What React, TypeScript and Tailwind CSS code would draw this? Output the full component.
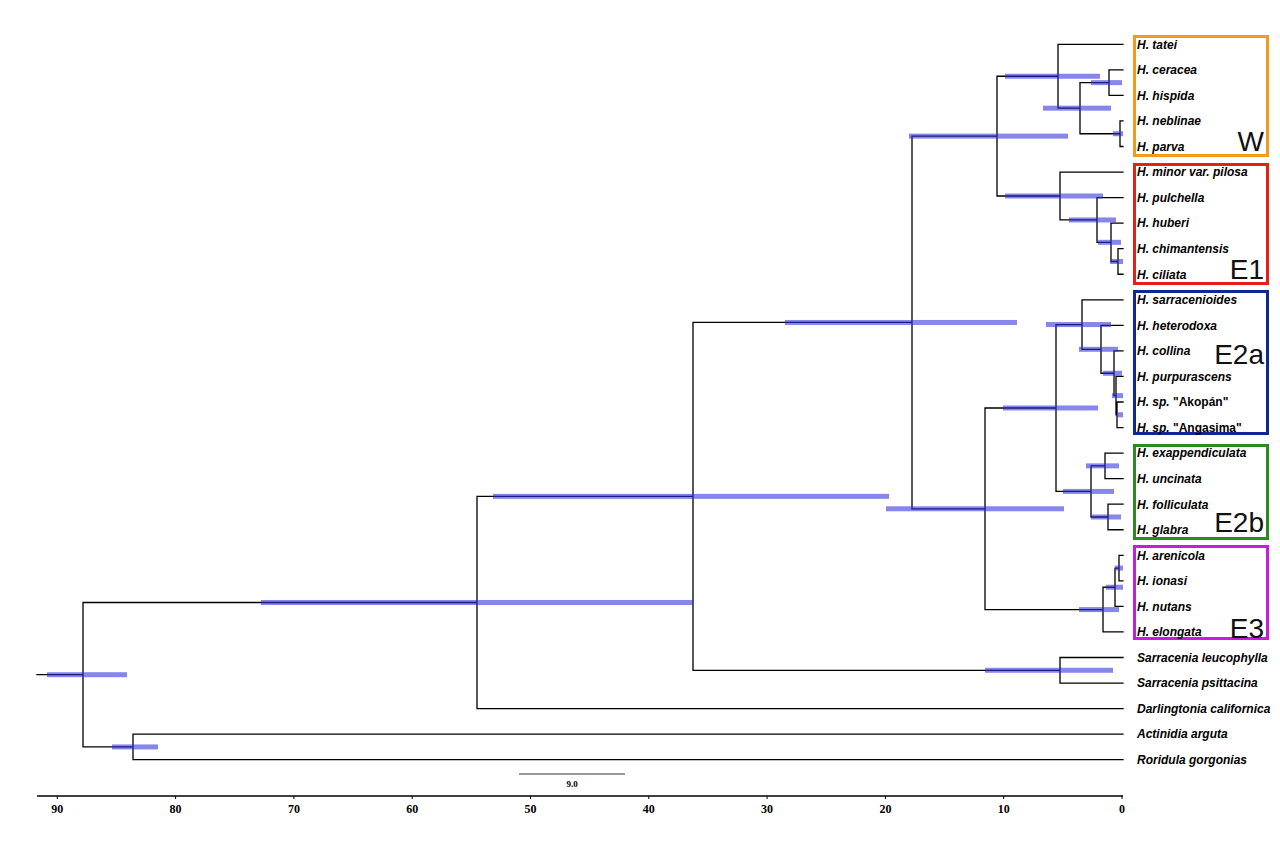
import React from "react";

// Dated phylogeny of Heliamphora with 95% HPD bars

type Node = { x: number; h: [number, number]; c: Array<Node | number> };

const n = (x: number, h: [number, number], ...c: Array<Node | number>): Node => ({ x, h, c });

const LEAF_END = 1123;
const leafY = (i: number) => 44.3 + i * 25.55;

const leaves: Array<[string, string?]> = [
  ["H. tatei"],
  ["H. ceracea"],
  ["H. hispida"],
  ["H. neblinae"],
  ["H. parva"],
  ["H. minor var. pilosa"],
  ["H. pulchella"],
  ["H. huberi"],
  ["H. chimantensis"],
  ["H. ciliata"],
  ["H. sarracenioides"],
  ["H. heterodoxa"],
  ["H. collina"],
  ["H. purpurascens"],
  ["H. sp.", ' "Akopán"'],
  ["H. sp.", ' "Angasima"'],
  ["H. exappendiculata"],
  ["H. uncinata"],
  ["H. folliculata"],
  ["H. glabra"],
  ["H. arenicola"],
  ["H. ionasi"],
  ["H. nutans"],
  ["H. elongata"],
  ["Sarracenia leucophylla"],
  ["Sarracenia psittacina"],
  ["Darlingtonia californica"],
  ["Actinidia arguta"],
  ["Roridula gorgonias"],
];

const tree = n(83, [47, 127],
  n(477, [261, 693],
    n(693, [493, 889],
      n(912, [785, 1017],
        n(997, [909, 1068],
          n(1058, [1005, 1100], 0,
            n(1080, [1043, 1111], n(1109, [1091, 1122], 1, 2), n(1120, [1113, 1123], 3, 4))),
          n(1060, [1005, 1103], 5,
            n(1097, [1069, 1116], 6, n(1111, [1098, 1121], 7, n(1118, [1110, 1123], 8, 9))))
        ),
        n(985, [886, 1064],
          n(1056, [1003, 1098],
            n(1082, [1046, 1111], 10,
              n(1101, [1079, 1118], 11,
                n(1114, [1103, 1122], 12, n(1116, [1112, 1123], 13, n(1117, [1117, 1123], 14, 15))))),
            n(1091, [1063, 1114], n(1105, [1086, 1119], 16, 17), n(1108, [1091, 1121], 18, 19))
          ),
          n(1103, [1079, 1119], n(1115, [1106, 1123], n(1119, [1115, 1123], 20, 21), 22), 23)
        )
      ),
      n(1060, [985, 1113], 24, 25)
    ),
    26
  ),
  n(133, [112, 158], 27, 28)
);

const paths: string[] = [];
const bars: { x1: number; x2: number; y: number }[] = [];

function layout(node: Node): number {
  const ys = node.c.map((ch) => (typeof ch === "number" ? leafY(ch) : layout(ch)));
  const xs = node.c.map((ch) => (typeof ch === "number" ? LEAF_END : ch.x));
  paths.push(`M${node.x} ${ys[0]}V${ys[ys.length - 1]}`);
  ys.forEach((y, i) => paths.push(`M${node.x} ${y}H${xs[i]}`));
  const y = (ys[0] + ys[ys.length - 1]) / 2;
  bars.push({ x1: node.h[0], x2: node.h[1], y });
  return y;
}

const rootY = layout(tree);
paths.push(`M37 ${rootY}H${tree.x}`);

const clades = [
  { label: "W", y: 35, h: 122, base: 151, color: "#f39a1e" },
  { label: "E1", y: 163, h: 122, base: 279, color: "#e32119" },
  { label: "E2a", y: 290, h: 145, base: 364, color: "#10279a" },
  { label: "E2b", y: 444, h: 96, base: 532, color: "#2a8c20" },
  { label: "E3", y: 545, h: 95, base: 638, color: "#c41edc" },
];

const ticks = [90, 80, 70, 60, 50, 40, 30, 20, 10, 0];
const tx = (t: number) => 1122 - 11.83 * t;

export default function App() {
  return (
    <div className="w-[1280px] h-[853px] bg-white overflow-hidden">
      <svg width={1280} height={853} viewBox="0 0 1280 853" className="block font-['Liberation_Sans',Arial,sans-serif]">
        {/* branches */}
        <path d={paths.join("")} stroke="#000" strokeWidth={1.3} fill="none" strokeLinecap="square" />

        {/* HPD bars */}
        {bars.map((b, i) => (
          <rect key={i} x={b.x1} y={b.y - 2.5} width={b.x2 - b.x1} height={5} fill="#2f2fdc" fillOpacity={0.58} />
        ))}

        {/* clade boxes */}
        {clades.map((c) => (
          <g key={c.label}>
            <rect x={1134.5} y={c.y + 1.5} width={133} height={c.h - 3} fill="none" stroke={c.color} strokeWidth={3} />
            <text x={1264} y={c.base} textAnchor="end" fill="#111" className="text-[28px]">
              {c.label}
            </text>
          </g>
        ))}

        {/* tip labels */}
        {leaves.map(([it, up], i) => (
          <text key={i} x={1137} y={leafY(i) + 4.3} fill="#000" className="text-[12px] font-bold">
            <tspan className="italic">{it}</tspan>
            {up && <tspan>{up}</tspan>}
          </text>
        ))}

        {/* scale bar */}
        <line x1={519} x2={625} y1={774} y2={774} stroke="#333" strokeWidth={1.2} />
        <text x={572} y={787} textAnchor="middle" fill="#000" className="text-[9px] font-bold font-['Liberation_Serif',serif]">
          9.0
        </text>

        {/* time axis */}
        <line x1={37} x2={1123} y1={796} y2={796} stroke="#000" strokeWidth={1.5} />
        {ticks.map((t) => (
          <g key={t}>
            <line x1={tx(t)} x2={tx(t)} y1={796} y2={799} stroke="#000" strokeWidth={1} />
            <text x={tx(t)} y={813} textAnchor="middle" fill="#000" className="text-[12px] font-bold font-['Liberation_Serif',serif]">
              {t}
            </text>
          </g>
        ))}
      </svg>
    </div>
  );
}
